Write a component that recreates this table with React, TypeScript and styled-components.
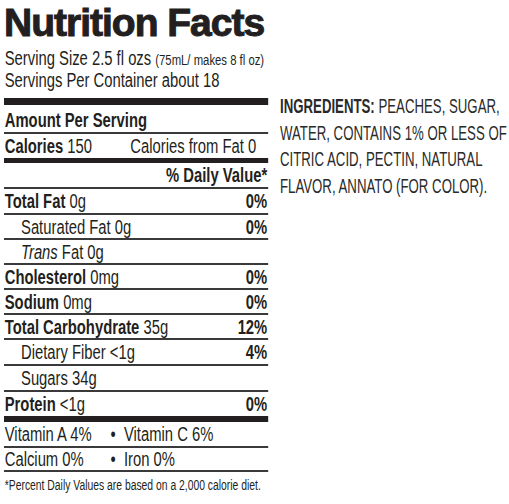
import React from 'react'
import styled, { createGlobalStyle } from 'styled-components';

// no condensed face is installed, so the label text is squeezed with scaleX
const SQUEEZE = 0.74;
const INGR_SQUEEZE = 0.645;

const GlobalStyle = createGlobalStyle`
  body {
    margin: 0;
    background: #ffffff;
    font-family: "Liberation Sans", Arial, sans-serif;
    color: #231f20;
  }
`;

type Nutrient = {
  name: string
  amount: string
  daily?: string
  bold?: boolean
  indent?: boolean
  italicName?: boolean
  h?: number
}

const nutrients: Nutrient[] = [
  { name: "Total Fat", amount: "0g", daily: "0%", bold: true, h: 24 },
  { name: "Saturated Fat", amount: "0g", daily: "0%", indent: true },
  { name: "Trans", amount: "Fat 0g", indent: true, italicName: true },
  { name: "Cholesterol", amount: "0mg", daily: "0%", bold: true },
  { name: "Sodium", amount: "0mg", daily: "0%", bold: true },
  { name: "Total Carbohydrate", amount: "35g", daily: "12%", bold: true },
  { name: "Dietary Fiber", amount: "<1g", daily: "4%", indent: true, h: 24 },
  { name: "Sugars", amount: "34g", indent: true, h: 24 },
]

const App = () => {
  return (
    <Page>
      <GlobalStyle />
      <Label>
        <Title>Nutrition Facts</Title>
        <Condensed>
          <Serving>
            Serving Size 2.5 fl ozs <Small>(75mL/ makes 8 fl oz)</Small>
          </Serving>
          <Serving>Servings Per Container about 18</Serving>
          <Bar h={7} top={7} />

          <Row h={27} pt={3}><b>Amount Per Serving</b></Row>
          <Row h={24} line={false}>
            <span><b>Calories</b> 150</span>
            <Right pr={15}>Calories from Fat 0</Right>
          </Row>
          <Bar h={5} />
          <Row h={24}><Right><b>% Daily Value*</b></Right></Row>

          {nutrients.map((n) => (
            <Row key={n.name} h={n.h} indent={n.indent}>
              <span>
                {n.bold ? <b>{n.name}</b> : n.italicName ? <i>{n.name}</i> : n.name} {n.amount}
              </span>
              {n.daily ? <Right><b>{n.daily}</b></Right> : null}
            </Row>
          ))}

          <Row h={24} line={false}>
            <span><b>Protein</b> &lt;1g</span>
            <Right><b>0%</b></Right>
          </Row>
          <Bar h={6} />

          <VitaminRow h={24}>
            <span>Vitamin A 4%</span>
            <span>•&nbsp;&nbsp;Vitamin C 6%</span>
          </VitaminRow>
          <VitaminRow h={22}>
            <span>Calcium 0%</span>
            <span>•&nbsp;&nbsp;Iron 0%</span>
          </VitaminRow>
          <Footnote>*Percent Daily Values are based on a 2,000 calorie diet.</Footnote>
        </Condensed>
      </Label>

      <IngredientsBox>
        <Ingredients>
          <strong>INGREDIENTS:</strong> PEACHES, SUGAR,<br />
          WATER, CONTAINS 1% OR LESS OF<br />
          CITRIC ACID, PECTIN, NATURAL<br />
          FLAVOR, ANNATO (FOR COLOR).
        </Ingredients>
      </IngredientsBox>
    </Page>
  )
}

export default App;

const Page = styled.div`
  display: flex;
  align-items: flex-start;
  width: 509px;
  height: 504px;
  overflow: hidden;
`;

const Label = styled.div`
  width: 264px;
  flex-shrink: 0;
  margin-left: 4px;
`;

const Title = styled.h1`
  margin: 0;
  height: 47px;
  font-size: 39px;
  line-height: 46px;
  font-weight: 700;
  letter-spacing: -1px;
  -webkit-text-stroke: 1px #231f20;
  color: #231f20;
  white-space: nowrap;
`;

const Condensed = styled.div`
  width: ${264 / SQUEEZE}px;
  transform: scaleX(${SQUEEZE});
  transform-origin: 0 0;
`;

const Serving = styled.div`
  height: 22px;
  line-height: 22px;
  font-size: 20px;
  padding-left: 1px;
  white-space: nowrap;
`;

const Small = styled.span`
  font-size: 15.3px;
`;

const Bar = styled.div<{ h: number; top?: number }>`
  height: ${(p) => p.h}px;
  margin-top: ${(p) => p.top ?? 0}px;
  background: #231f20;
`;

const Row = styled.div<{ h?: number; pt?: number; line?: boolean; indent?: boolean }>`
  display: flex;
  justify-content: space-between;
  align-items: center;
  box-sizing: content-box;
  height: ${(p) => (p.h ?? 23) - (p.pt ?? 0)}px;
  padding-top: ${(p) => p.pt ?? 0}px;
  line-height: 22px;
  font-size: 20px;
  padding-left: ${(p) => (p.indent ? 23 : 1)}px;
  padding-right: 1px;
  white-space: nowrap;
  border-bottom: ${(p) => (p.line === false ? "none" : "2px solid #3a3a3a")};
  b { font-weight: 700; }
  i { font-style: italic; }
`;

const Right = styled.span<{ pr?: number }>`
  margin-left: auto;
  padding-right: ${(p) => p.pr ?? 0}px;
`;

const VitaminRow = styled.div<{ h: number }>`
  display: grid;
  grid-template-columns: 143px 1fr;
  align-items: center;
  height: ${(p) => p.h}px;
  line-height: 22px;
  font-size: 20px;
  padding-left: 1px;
  white-space: nowrap;
  border-bottom: 2px solid #3a3a3a;
`;

const Footnote = styled.div`
  height: 26px;
  line-height: 26px;
  font-size: 14px;
  white-space: nowrap;
  padding-left: 1px;
`;

const IngredientsBox = styled.div`
  width: 228px;
  margin: 93px 0 0 12px;
`;

const Ingredients = styled.p`
  margin: 0;
  width: ${228 / INGR_SQUEEZE}px;
  transform: scaleX(${INGR_SQUEEZE});
  transform-origin: 0 0;
  font-size: 20.5px;
  line-height: 26.5px;
  white-space: nowrap;
  color: #2a2a2a;
  strong { font-weight: 700; }
`;
